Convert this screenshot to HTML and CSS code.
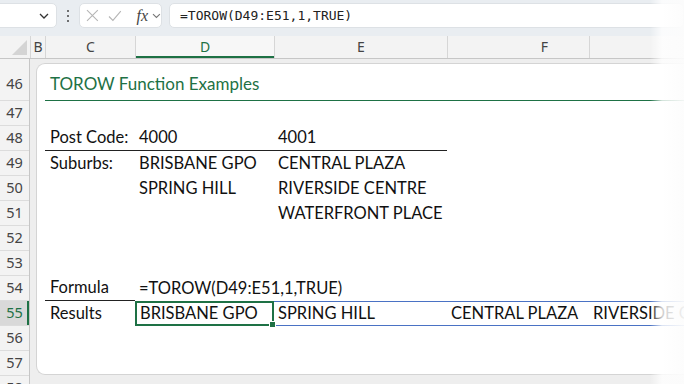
FILE: index.html
```html
<!DOCTYPE html>
<html lang="en">
<head>
  <meta charset="UTF-8">
  <meta name="viewport" content="width=device-width, initial-scale=1.0">
  <title>TOROW Function Examples</title>
  <link rel="stylesheet" href="styles.css">
</head>
<body>

  <div class="app">
    <!-- barra de formulas -->
    <div class="toolbar">
      <div class="namebox">
        <svg width="10" height="6" viewBox="0 0 10 6"><path d="M1 1l4 4 4-4" fill="none" stroke="#333" stroke-width="1.3"/></svg>
      </div>
      <div class="dots"><span></span><span></span><span></span></div>
      <div class="fxbox">
        <svg width="13" height="13" viewBox="0 0 13 13"><path d="M1 1l11 11M12 1L1 12" stroke="#b5b5b5" stroke-width="1.1"/></svg>
        <svg width="14" height="12" viewBox="0 0 14 12"><path d="M1 6.5l4 4L13 1" fill="none" stroke="#b5b5b5" stroke-width="1.1"/></svg>
        <span class="fx">fx</span>
        <svg width="9" height="6" viewBox="0 0 9 6"><path d="M1 1l3.5 3.5L8 1" fill="none" stroke="#777" stroke-width="1.1"/></svg>
      </div>
      <div class="formula">=TOROW(D49:E51,1,TRUE)</div>
    </div>

    <!-- encabezados de columna -->
    <div class="colheads">
      <div class="corner"><span class="tri"></span></div>
      <div class="colhead">B</div>
      <div class="colhead">C</div>
      <div class="colhead active">D</div>
      <div class="colhead">E</div>
      <div class="colhead col-f">F</div>
      <div class="colhead last"></div>
    </div>

    <div class="sheet">
      <div class="rowheads">
        <div class="rowhead first">46</div>
        <div class="rowhead">47</div>
        <div class="rowhead">48</div>
        <div class="rowhead">49</div>
        <div class="rowhead">50</div>
        <div class="rowhead">51</div>
        <div class="rowhead">52</div>
        <div class="rowhead">53</div>
        <div class="rowhead">54</div>
        <div class="rowhead active">55</div>
        <div class="rowhead">56</div>
        <div class="rowhead">57</div>
        <div class="rowhead">58</div>
      </div>

      <div class="gutter"></div>

      <div class="card">
        <div class="grid">
          <div class="cell title">TOROW Function Examples</div>

          <div class="cell"></div><div class="cell"></div><div class="cell"></div><div class="cell"></div><div class="cell"></div>

          <div class="cell col-c bb">Post Code:</div>
          <div class="cell bb">4000</div>
          <div class="cell bb">4001</div>
          <div class="cell"></div><div class="cell"></div>

          <div class="cell col-c">Suburbs:</div>
          <div class="cell">BRISBANE GPO</div>
          <div class="cell">CENTRAL PLAZA</div>
          <div class="cell"></div><div class="cell"></div>

          <div class="cell"></div>
          <div class="cell">SPRING HILL</div>
          <div class="cell">RIVERSIDE CENTRE</div>
          <div class="cell"></div><div class="cell"></div>

          <div class="cell"></div>
          <div class="cell"></div>
          <div class="cell">WATERFRONT PLACE</div>
          <div class="cell"></div><div class="cell"></div>

          <div class="cell"></div><div class="cell"></div><div class="cell"></div><div class="cell"></div><div class="cell"></div>
          <div class="cell"></div><div class="cell"></div><div class="cell"></div><div class="cell"></div><div class="cell"></div>

          <div class="cell col-c bb">Formula</div>
          <div class="cell">=TOROW(D49:E51,1,TRUE)</div>
          <div class="cell"></div><div class="cell"></div><div class="cell"></div>

          <div class="cell col-c">Results</div>
          <div class="cell selected">BRISBANE GPO</div>
          <div class="cell spill">SPRING HILL</div>
          <div class="cell spill">CENTRAL PLAZA</div>
          <div class="cell spill">RIVERSIDE CENTRE</div>

          <div class="cell"></div><div class="cell"></div><div class="cell"></div><div class="cell"></div><div class="cell"></div>
          <div class="cell"></div><div class="cell"></div><div class="cell"></div><div class="cell"></div><div class="cell"></div>
        </div>
      </div>
    </div>

    <div class="fade"></div>
  </div>

</body>
</html>
```

FILE: styles.css
```css
body {
  margin: 0;
  background-color: #ffffff;
  font-family: 'Noto Sans', sans-serif;
}

.app {
  position: relative;
  width: 684px;
  height: 384px;
  overflow: hidden;
  background-color: #eeeeee;
}

/* barra de formulas */
.toolbar {
  display: flex;
  align-items: center;
  height: 36px;
  padding-bottom: 5px;
  box-sizing: border-box;
  background-color: #e9edf1;
}

.namebox {
  display: flex;
  align-items: center;
  justify-content: flex-end;
  margin-left: -10px;
  width: 67px;
  height: 25px;
  padding-right: 7px;
  box-sizing: border-box;
  background: #fff;
  border: 1px solid #dde1e5;
  border-radius: 5px;
}

.dots {
  display: flex;
  flex-direction: column;
  gap: 3px;
  width: 22px;
  align-items: center;
}

.dots span {
  width: 2px;
  height: 2px;
  background: #444;
  border-radius: 1px;
}

.fxbox {
  display: flex;
  align-items: center;
  gap: 9px;
  width: 83px;
  height: 25px;
  padding-left: 6px;
  box-sizing: border-box;
  background: #fff;
  border: 1px solid #dde1e5;
  border-radius: 5px;
}

.fxbox .fx {
  font-family: 'Liberation Serif', serif;
  font-style: italic;
  font-size: 16px;
  color: #444;
  margin-left: 6px;
  margin-right: -5px;
}

.formula {
  flex: 1;
  height: 25px;
  margin-left: 7px;
  padding-left: 10px;
  box-sizing: border-box;
  background: #fff;
  border: 1px solid #dde1e5;
  border-radius: 5px;
  font-family: 'DejaVu Sans Mono', monospace;
  font-size: 13px;
  line-height: 23px;
  color: #222;
}

/* encabezados de columna */
.colheads {
  display: grid;
  grid-template-columns: 30px 15px 90px 139px 173px 142px 1fr;
  height: 22px;
  background-color: #f3f3f3;
  border-bottom: 1px solid #c6c6c6;
}

.colhead {
  border-left: 1px solid #d6d6d6;
  text-align: center;
  font-size: 14px;
  line-height: 22px;
  color: #444;
}

.colhead.active {
  color: #1e7145;
  background-color: #f7f7f7;
  box-shadow: inset 0 -2px 0 #1e7145;
}

.colhead.col-f {
  padding-left: 52px;
}

.corner {
  position: relative;
}

.corner .tri {
  position: absolute;
  right: 3px;
  bottom: 3px;
  width: 0;
  height: 0;
  border-left: 15px solid transparent;
  border-bottom: 15px solid #d4d4d4;
}

/* hoja */
.sheet {
  display: flex;
  height: 325px;
}

.rowheads {
  width: 30px;
  background-color: #f3f3f3;
  border-right: 1px solid #c6c6c6;
  box-sizing: border-box;
}

.rowhead {
  display: flex;
  align-items: flex-end;
  justify-content: center;
  height: 25px;
  padding-bottom: 3px;
  box-sizing: border-box;
  border-bottom: 1px solid #dcdcdc;
  font-size: 14.5px;
  color: #444;
}

.rowhead.first {
  height: 42px;
  padding-bottom: 7px;
}

.rowhead.active {
  color: #1e7145;
  background-color: #d9d9d9;
  box-shadow: inset -2px 0 0 #1e7145;
}

.gutter {
  width: 6px;
}

.card {
  flex: 1;
  margin-top: 4px;
  height: 312px;
  padding-left: 8px;
  box-sizing: border-box;
  background: #fff;
  border: 1px solid #d4d4d4;
  border-right: none;
  border-radius: 9px 0 0 9px;
  overflow: hidden;
}

.grid {
  display: grid;
  grid-template-columns: 90px 139px 173px 142px 1fr;
  grid-template-rows: 37px;
  grid-auto-rows: 25px;
}

.cell {
  display: flex;
  align-items: flex-end;
  padding: 0 0 3px 4px;
  box-sizing: border-box;
  font-family: 'Lato', sans-serif;
  font-size: 16.5px;
  color: #111;
  white-space: nowrap;
}

.cell.col-c {
  padding-left: 5px;
}

.cell.title {
  grid-column: 1 / -1;
  padding-left: 5px;
  padding-bottom: 6px;
  font-size: 17px;
  color: #1e7145;
  border-bottom: 1px solid #1e7145;
}

.cell.bb {
  border-bottom: 1px solid #222;
}

.cell.selected {
  position: relative;
  border: 2px solid #1e7145;
  padding-left: 3px;
  padding-bottom: 1px;
}

.cell.selected::after {
  content: "";
  position: absolute;
  right: -4px;
  bottom: -4px;
  width: 5px;
  height: 5px;
  background: #1e7145;
  border: 1px solid #fff;
}

.cell.spill {
  border-top: 1px solid #4a72c4;
  border-bottom: 1px solid #4a72c4;
  padding-bottom: 2px;
}

/* desvanecido del borde derecho */
.fade {
  position: absolute;
  top: 0;
  right: 0;
  width: 34px;
  height: 100%;
  background: linear-gradient(to right, rgba(255, 255, 255, 0) 0, rgba(255, 255, 255, 0.8) 12px, rgba(252, 252, 252, 0.95) 100%);
}
```
